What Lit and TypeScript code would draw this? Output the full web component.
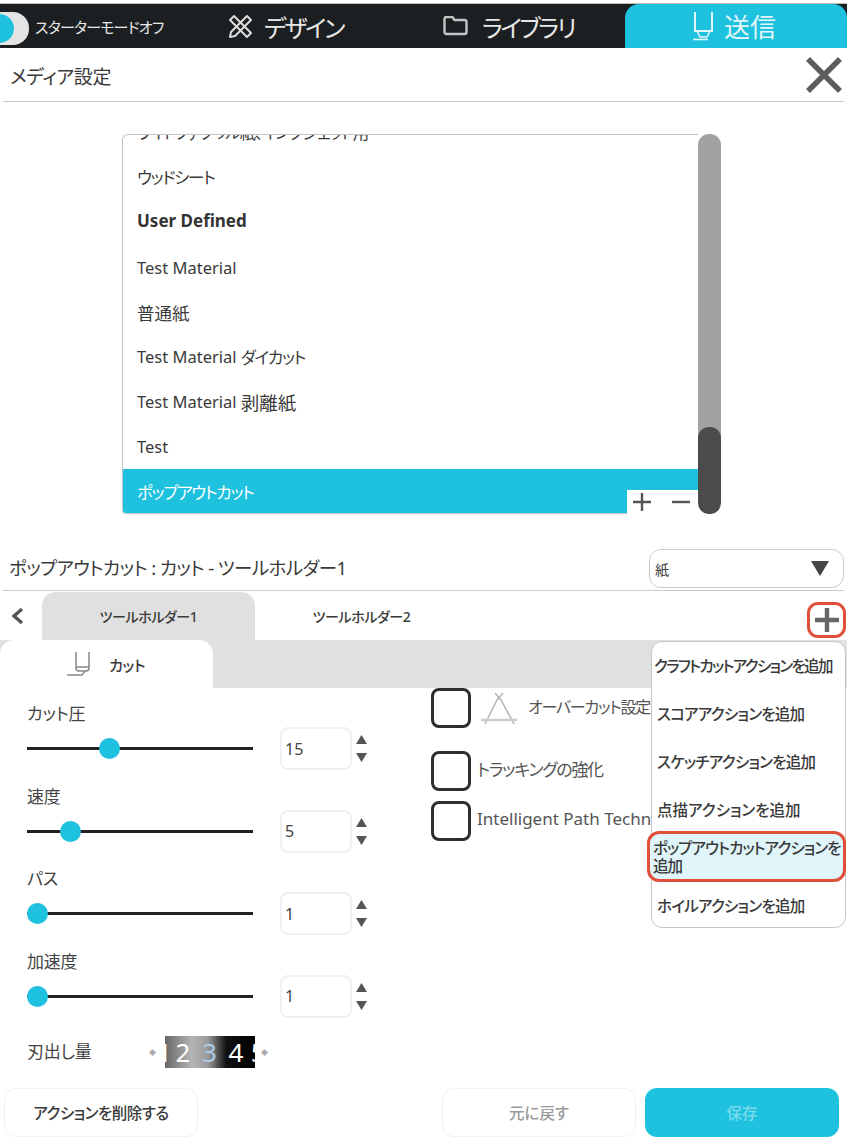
import { LitElement, html, css } from "lit";
import { customElement } from "lit/decorators.js";

const blade = (w: number, h: number, c: string) => html`<svg width=${w} height=${h} viewBox="0 0 24 28" fill="none" stroke=${c} stroke-width="1.5">
  <path d="M10 2V18q0 3 3 3h7q3 0 3-3V2"/><path d="M10 17h13"/><path d="M1 25h15l3-4"/></svg>`;

@customElement("app-root")
export class AppRoot extends LitElement {
  static styles = css`
    :host { display: block; height: 1137px; overflow: hidden; background: #fff; position: relative;
      font-family: "Noto Sans", "Noto Sans CJK JP", sans-serif; font-feature-settings: "palt"; color: #3a3a3a; font-size: 16px; }
    * { box-sizing: border-box; }
    .nav { margin-top: 3px; height: 45px; border-top: 1px solid #bbb; background: #1c1f21; display: flex; align-items: center; color: #e8e8e8; }
    .toggle { width: 29px; height: 33px; background: #e4e4e4; border-radius: 0 16px 16px 0; flex: none; position: relative; overflow: hidden; margin-top: 5px; }
    .toggle::before { content: ""; position: absolute; left: -16px; top: 2px; width: 30px; height: 29px; border-radius: 50%; background: #1ec1de; }
    .starter { font-size: 15px; letter-spacing: -.8px; margin: 0 0 0 6px; width: 193px; white-space: nowrap; }
    .navitem { display: flex; align-items: center; font-size: 24px; white-space: nowrap; color: #e8e8e8; flex: none; letter-spacing: -2.2px; }
    .design { width: 215px; gap: 11px; }
    .lib { width: 182px; gap: 14px; }
    .send { flex: 1; align-self: stretch; background: #1ec1de; border-radius: 14px 14px 0 0; padding-left: 67px; gap: 10px; letter-spacing: 0; font-size: 26px; color: #e2f7fb; }
    .header { height: 54px; margin: 0 3px; border-bottom: 1px solid #c8c8c8; display: flex; align-items: center; justify-content: space-between; padding: 2px 1px 0 7px; font-size: 19px; letter-spacing: -.4px; }
    .header svg { margin-top: -2px; }
    .listbox { position: relative; margin: 32px 0 0 122px; width: 599px; height: 380px; display: flex; }
    .list { flex: 1; border: 1px solid #c4c4c4; border-right: none; border-radius: 6px 0 0 4px; overflow: hidden; font-size: 16.5px; }
    .clip { height: 20px; margin-top: -12px; padding-left: 14px; white-space: nowrap; line-height: 20px; margin-bottom: 11px; letter-spacing: -1.2px; }
    .row { height: 45px; padding-left: 14px; display: flex; align-items: center; white-space: pre; }
    .row.user { font-weight: 700; font-size: 17px; height: 42px; color: #333; }
    .row.tm { height: 52px; }
    .row.plain { height: 41px; font-size: 17.5px; padding-bottom: 3px; }
    .row.sel { background: #1ec1de; color: #fff; }
    .kana { letter-spacing: -1.25px; }
    .kanji { font-size: 18.5px; }
    .scroll { width: 23px; height: 100%; background: #a2a2a2; border-radius: 11px; position: relative; overflow: hidden; flex: none; }
    .thumb { position: absolute; left: 0; right: 0; bottom: 0; height: 87px; background: #4b4b4b; border-radius: 11px; }
    .pm { position: absolute; right: 23px; bottom: 0; width: 71px; height: 24px; background: #fff; display: flex; align-items: center; justify-content: space-between; padding: 0 7px 0 5px; }
    .titlebar { margin: 35px 3px 0 3px; height: 42px; border-bottom: 1px solid #ccc; display: flex; align-items: flex-start; justify-content: space-between; font-size: 18.5px; letter-spacing: -.6px; padding: 0 0 0 6px; }
    .titlebar span.t { margin-top: 5px; }
    .select { width: 195px; height: 39px; border: 1px solid #ccc; border-radius: 12px; display: flex; align-items: center; justify-content: space-between; padding: 0 14px 0 5px; font-size: 14px; letter-spacing: 0; }
    .tabs { height: 49px; display: flex; position: relative; font-size: 14px; font-weight: 500; letter-spacing: -.4px; }
    .back { width: 42px; display: flex; align-items: center; justify-content: center; padding-right: 8px; }
    .tab { width: 213px; display: flex; align-items: center; justify-content: center; border-radius: 14px 14px 0 0; margin-top: 1px; }
    .tab.on { background: #e0e0e0; }
    .plus { position: absolute; left: 807px; top: 11px; width: 39px; height: 36px; border: 3px solid #e04f3a; border-radius: 11px; display: flex; align-items: center; justify-content: center; }
    .strip { height: 48px; background: #e0e0e0; display: flex; }
    .subtab { width: 213px; background: #fff; border-radius: 14px 14px 0 0; display: flex; align-items: center; gap: 19px; padding-left: 66px; font-size: 15px; font-weight: 500; letter-spacing: -.4px; }
    .body { display: flex; height: 400px; }
    .left { width: 431px; padding-left: 27px; flex: none; }
    .set { height: 82.6px; padding-top: 15px; }
    .lab { font-size: 17px; line-height: 22px; color: #444; letter-spacing: -.2px; }
    .ctl { display: flex; align-items: center; margin-top: 2px; }
    .slider { width: 226px; height: 3px; background: #222; position: relative; flex: none; }
    .knob { position: absolute; top: -9px; width: 21px; height: 21px; border-radius: 50%; background: #1ec1de; }
    .num { margin-left: 27px; width: 72px; height: 43px; border: 2px solid #f0f0f0; border-radius: 8px; display: flex; align-items: center; padding-left: 3px; font-size: 16px; color: #444; }
    .spin { margin-left: 4px; display: flex; flex-direction: column; gap: 9px; }
    .blade { display: flex; align-items: center; margin-top: 18px; height: 32px; }
    .blade .lab { width: 122px; }
    .gauge { width: 90px; height: 32px; background: linear-gradient(90deg, #666, #b5b5b5 30%, #999 48%, #111 68%, #000); color: #fff; display: flex; align-items: center; font-size: 26px; overflow: hidden; white-space: nowrap; margin: 0 6px 0 9px; }
    .gauge span { flex: none; width: 26.5px; text-align: center; }
    .gauge .d1 { width: 12.75px; margin-left: -8px; }
    .gauge .d3 { color: #a9cbe8; }
    .gauge .d5 { width: 18px; }
    .tinyarrow { color: #aaa; font-size: 7px; }
    .right { flex: 1; position: relative; }
    .chk { display: flex; color: #555; white-space: nowrap; align-items: flex-start; }
    .box { width: 40px; height: 40px; border: 3px solid #2b2f30; border-radius: 8px; flex: none; background: #fff; }
    .c1 { height: 63px; }
    .c1 span { margin-top: 6px; margin-left: 10px; font-size: 16px; letter-spacing: -1.2px; }
    .c1 svg { margin: 4px 0 0 9px; flex: none; }
    .c2 { height: 50px; }
    .c2 span { margin: 5px 0 0 6px; font-size: 17px; letter-spacing: -1.3px; }
    .c3 span { margin: 6px 0 0 6px; font-size: 17px; }
    .menu { position: absolute; left: 651px; top: 641px; width: 195px; height: 287px; background: #fff; border: 1px solid #c6c6c6; border-radius: 11px; font-size: 15.5px; font-weight: 500; letter-spacing: -.75px; color: #3a3a3a; display: flex; flex-direction: column; }
    .mi { height: 48px; display: flex; align-items: center; padding-left: 5px; white-space: nowrap; flex: none; }
    .mi.first { height: 47px; padding-left: 2px; letter-spacing: -1.7px; }
    .mi.dot { letter-spacing: 0; }
    .mi.h { position: relative; margin: -2px 0 0 -5px; width: 199px; height: 51px; padding-left: 3px; background: #dff5fa; border: 3px solid #e04f3a; border-radius: 12px; line-height: 18px; letter-spacing: -.95px; }
    .mi.last { height: 46px; }
    .foot { display: flex; height: 49px; padding-left: 4px; font-size: 15.5px; font-weight: 500; }
    .btn { width: 194px; height: 49px; border: 1.5px solid #f0f0f0; border-radius: 12px; display: flex; align-items: center; justify-content: center; }
    .del { letter-spacing: -.5px; }
    .undo { margin-left: 244px; color: #999; }
    .save { margin-left: 9px; background: #1ec1de; border: none; color: #7bdcec; }
  `;

  private setting(label: string, value: number, left: number) {
    return html`<div class="set">
      <div class="lab">${label}</div>
      <div class="ctl">
        <div class="slider"><div class="knob" style="left:${left}px"></div></div>
        <div class="num">${value}</div>
        <div class="spin">
          <svg width="11" height="9" viewBox="0 0 11 9"><path d="M5.5 0 11 9H0z" fill="#555"/></svg>
          <svg width="11" height="9" viewBox="0 0 11 9"><path d="M5.5 9 0 0H11z" fill="#555"/></svg>
        </div>
      </div>
    </div>`;
  }

  render() {
    return html`
      <div class="nav">
        <div class="toggle"></div>
        <div class="starter">スターターモードオフ</div>
        <div class="navitem design">
          <svg width="25" height="25" viewBox="0 0 25 25" fill="none" stroke="#dcdcdc" stroke-width="2" stroke-linejoin="round">
            <path d="M2 6 6 2 23 19 19 23z"/>
            <path d="M19 2 23 6 7 22 2 23 3 18z"/>
          </svg><span>デザイン</span>
        </div>
        <div class="navitem lib">
          <svg width="25" height="20" viewBox="0 0 25 20" fill="none" stroke="#c4c4c4" stroke-width="2.4">
            <path d="M1.5 3q0-2 2-2h6l2 3h10q2 0 2 2v10q0 2-2 2h-18q-2 0-2-2z"/>
          </svg><span>ライブラリ</span>
        </div>
        <div class="navitem send">
          <svg width="22" height="30" viewBox="0 0 22 30" fill="none" stroke="#e2f7fb" stroke-width="2">
            <path d="M3 1V20H20V1"/><path d="M5 20 8 26H15L18 20" stroke-width="1.6"/><path d="M1 28.5H16" stroke-width="1.6"/>
          </svg><span>送信</span>
        </div>
      </div>

      <div class="header"><span>メディア設定</span>
        <svg width="38" height="38" viewBox="0 0 38 38" stroke="#5c5c5c" stroke-width="5.5" fill="none"><path d="M3 3 35 35M35 3 3 35"/></svg>
      </div>

      <div class="listbox">
        <div class="list">
          <div class="clip">ライトファブリル紙、インクジェット用</div>
          <div class="row kana">ウッドシート</div>
          <div class="row user">User Defined</div>
          <div class="row tm">Test Material</div>
          <div class="row plain">普通紙</div>
          <div class="row">Test Material <span class="kana">ダイカット</span></div>
          <div class="row">Test Material <span class="kanji">剥離紙</span></div>
          <div class="row">Test</div>
          <div class="row sel kana">ポップアウトカット</div>
        </div>
        <div class="scroll"><div class="thumb"></div></div>
        <div class="pm">
          <svg width="20" height="20" viewBox="0 0 20 20" stroke="#555" stroke-width="2.4"><path d="M1 10H19M10 1V19"/></svg>
          <svg width="20" height="20" viewBox="0 0 20 20" stroke="#555" stroke-width="2.4"><path d="M1 10H19"/></svg>
        </div>
      </div>

      <div class="titlebar">
        <span class="t">ポップアウトカット : カット - ツールホルダー1</span>
        <div class="select"><span>紙</span>
          <svg width="18" height="15" viewBox="0 0 18 15"><path d="M0 0H18L9 15z" fill="#444"/></svg>
        </div>
      </div>

      <div class="tabs">
        <div class="back"><svg width="13" height="18" viewBox="0 0 13 18" fill="none" stroke="#555" stroke-width="3.4"><path d="M11 2 3 9 11 16"/></svg></div>
        <div class="tab on">ツールホルダー1</div>
        <div class="tab">ツールホルダー2</div>
        <div class="plus"><svg width="26" height="26" viewBox="0 0 26 26" stroke="#666" stroke-width="4.4"><path d="M1 13H25M13 1V25"/></svg></div>
      </div>
      <div class="strip"><div class="subtab">${blade(24, 28, "#888")}<span>カット</span></div></div>

      <div class="body">
        <div class="left">
          ${this.setting("カット圧", 15, 72)}
          ${this.setting("速度", 5, 33)}
          ${this.setting("パス", 1, 0)}
          ${this.setting("加速度", 1, 0)}
          <div class="blade">
            <div class="lab">刃出し量</div>
            <span class="tinyarrow">◆</span>
            <div class="gauge"><span class="d1">1</span><span>2</span><span class="d3">3</span><span>4</span><span class="d5">5</span></div>
            <span class="tinyarrow">◆</span>
          </div>
        </div>
        <div class="right">
          <div class="chk c1"><div class="box"></div>
            <svg width="38" height="34" viewBox="0 0 38 34" fill="none" stroke="#b4b4b4" stroke-width="1.5">
              <path d="M15 1 21 8 34 32M23 1 17 8 5 32"/><path d="M1 28H37" stroke-width="2.5" stroke="#ccc"/>
            </svg>
            <span>オーバーカット設定</span></div>
          <div class="chk c2"><div class="box"></div><span>トラッキングの強化</span></div>
          <div class="chk c3"><div class="box"></div><span>Intelligent Path Technology</span></div>
        </div>
      </div>

      <div class="foot">
        <div class="btn del">アクションを削除する</div>
        <div class="btn undo">元に戻す</div>
        <div class="btn save">保存</div>
      </div>

      <div class="menu">
        <div class="mi first">クラフトカットアクションを追加</div>
        <div class="mi">スコアアクションを追加</div>
        <div class="mi">スケッチアクションを追加</div>
        <div class="mi dot">点描アクションを追加</div>
        <div class="mi h"><span>ポップアウトカットアクションを<br />追加</span></div>
        <div class="mi last">ホイルアクションを追加</div>
      </div>
    `;
  }
}
